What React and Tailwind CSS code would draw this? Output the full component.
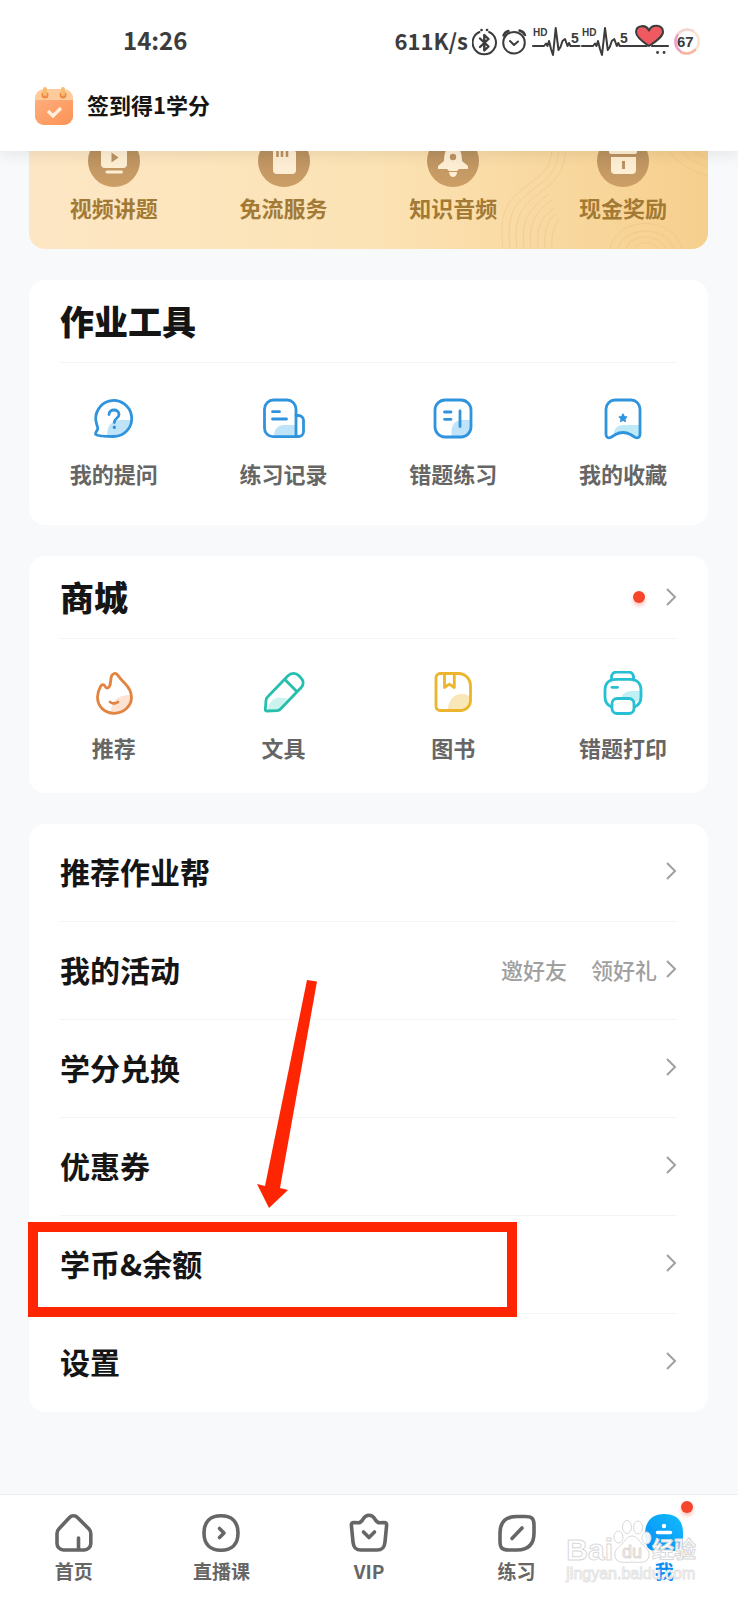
import { useState } from 'react'
import clsx from 'clsx'

/* ---------- Status bar ---------- */

const StatusIcons = () => (
  <svg width="230" height="36" viewBox="0 0 230 36" fill="none" stroke="#3c3c3c" strokeWidth="2" strokeLinecap="round" strokeLinejoin="round" fontFamily="Liberation Sans, sans-serif">
    {/* bluetooth */}
    <path d="M7.5 8a11.7 11.7 0 1 0 9.6 0" />
    <path d="M8 14.500l8.500 8-4.200 4V11l4.200 4-8.500 8" strokeWidth="2.400" />
    <path d="M9.500 6h.1M15 6h.1" strokeWidth="2.600" />
    {/* alarm */}
    <circle cx="42" cy="18.700" r="10.800" />
    <path d="M38 17l4 4 4-3.500" />
    <path d="M31.500 11.500Q33 8 36.500 7M47.500 6.500Q51.500 7.500 53 11" strokeWidth="2.400" />
    {/* signal lines */}
    <path d="M61 22h11l2-2.500 1.500 2.500 1.500-5 2 8 2 6L83.700 4l2.800 22 2-3 2-6 2.500-2 2.500 7 1.500-3 1.500 3h9" />
    <path d="M110 22h11l2-2.500 1.500 2.500 1.500-5 2 8 2 6L133 4l2.800 22 2-3 2-6 2.500-2 2.500 7 1.500-3 1.500 3h27" />
    <path d="M180 22h16" />
    <path d="M177 22C168 16 164 12 164 8c0-7 10-8 13-1.500C180-.5 191 .5 191 8c0 4-5 8-14 14z" fill="#ee5a60" />
    <path d="M185.500 28.500h.1M192 28.500h.1" strokeWidth="2.800" />
    <g fill="#3c3c3c" stroke="none" fontWeight="700">
      <text x="61" y="12" fontSize="10">HD</text>
      <text x="110" y="12" fontSize="10">HD</text>
      <text x="99" y="19" fontSize="14">5</text>
      <text x="148" y="19" fontSize="14">5</text>
      <text x="205" y="23" fontSize="15">67</text>
    </g>
    {/* battery ring */}
    <path d="M206 10a11.700 11.700 0 0 1 15-3" stroke="#f6d3cb" strokeWidth="2.600" />
    <path d="M222 8a11.700 11.700 0 0 1 2 17" stroke="#fbe3cf" strokeWidth="2.600" />
    <path d="M223 26a11.700 11.700 0 0 1-14 2" stroke="#f6b59d" strokeWidth="2.600" />
    <path d="M208 27a11.700 11.700 0 0 1-2.500-16" stroke="#eda0c8" strokeWidth="2.600" />
  </svg>
)

const CalendarIcon = () => (
  <svg width="38" height="40" viewBox="0 0 38 40" fill="none">
    <defs>
      <linearGradient id="calBody" x1="0" y1="0" x2="1" y2="1">
        <stop offset="0" stopColor="#ffad7c" />
        <stop offset="1" stopColor="#fb9254" />
      </linearGradient>
    </defs>
    <rect x="0" y="3" width="38" height="36" rx="9" fill="#fdcb9c" />
    <path d="M0 14h38v16a9 9 0 0 1-9 9H9a9 9 0 0 1-9-9z" fill="url(#calBody)" />
    <circle cx="10" cy="9" r="3.500" fill="#f18a45" />
    <circle cx="28" cy="9" r="3.500" fill="#f18a45" />
    <path d="M10 3v5M28 3v5" stroke="#f6bd72" strokeWidth="4" strokeLinecap="round" />
    <path d="M13 25l5 5 8-8" stroke="#fff0dd" strokeWidth="3.200" />
  </svg>
)

/* ---------- Gold card icons ---------- */

const GoldIcon = ({ children }) => (
  <svg width="52" height="52" viewBox="0 0 52 52">
    <defs>
      <linearGradient id="goldCircle" x1="0" y1="0" x2="0" y2="1">
        <stop offset="0" stopColor="#b08a5c" />
        <stop offset="1" stopColor="#cd9f67" />
      </linearGradient>
    </defs>
    <circle cx="26" cy="26" r="26" fill="url(#goldCircle)" />
    <g fill="#fdeed3">{children}</g>
  </svg>
)

const goldItems = [
  {
    label: '视频讲题',
    icon: (
      <GoldIcon>
        <rect x="13" y="10" width="26" height="23" rx="4" />
        <path d="M23.500 17.500l7 5-7 5z" fill="#bb9262" />
        <rect x="17.500" y="35.500" width="17.500" height="3" rx="1.500" />
      </GoldIcon>
    ),
  },
  {
    label: '免流服务',
    icon: (
      <GoldIcon>
        <path d="M18 10h13l7 7v18a4 4 0 0 1-4 4H19a4 4 0 0 1-4-4V14z" />
        <path d="M19.500 14v8M24 14v8M29 14v8" stroke="#bb9262" strokeWidth="2.500" />
      </GoldIcon>
    ),
  },
  {
    label: '知识音频',
    icon: (
      <GoldIcon>
        <path d="M26 8c7 4 9 10 9 18l6 5v3H32l-2 2h-8l-2-2h-9v-3l6-5c0-8 2-14 9-18z" />
        <path d="M22 37h8c0 3-2 5-4 5s-4-2-4-5z" />
        <circle cx="26" cy="22" r="3.200" fill="#bb9262" />
      </GoldIcon>
    ),
  },
  {
    label: '现金奖励',
    icon: (
      <GoldIcon>
        <rect x="12" y="11" width="28" height="8" rx="2" />
        <path d="M14 22h25v13a4 4 0 0 1-4 4H18a4 4 0 0 1-4-4z" />
        <path d="M26.500 26v8" stroke="#bb9262" strokeWidth="3" />
      </GoldIcon>
    ),
  },
]

/* ---------- Tool icons ---------- */

const LineIcon = ({ color, children }) => (
  <svg width="44" height="44" viewBox="0 0 44 44" fill="none" stroke={color} strokeWidth="2.800" strokeLinecap="round" strokeLinejoin="round">
    {children}
  </svg>
)

const homeworkTools = [
  {
    label: '我的提问',
    icon: (
      <LineIcon color="#2f94dd">
        <path d="M15 39c0-11 5-16 14-16h11c-1 9-7 16-18 16z" fill="#bfe4fa" stroke="none" />
        <path d="M22 39.500A18 18 0 1 0 4.600 27c.6 2 1.600 3.800 1 5.500C4.500 34.500 2.800 36 3.800 37.500c1.700 1.500 10 2 18.200 2z" />
        <path d="M17 17.500c0-6 10-6 10 0 0 4-4.700 3.500-4.700 8" />
        <path d="M22.300 30.200v.3" strokeWidth="3.200" />
      </LineIcon>
    ),
  },
  {
    label: '练习记录',
    icon: (
      <LineIcon color="#2f94dd">
        <path d="M12 39c0-7 4-11 10-11h12v11z" fill="#bfe4fa" stroke="none" />
        <path d="M34 39.700H11A8.500 8.500 0 0 1 2.500 31V12A9 9 0 0 1 11.500 3H25a9 9 0 0 1 9 9z" />
        <path d="M34 18.500h2.500a5 5 0 0 1 5 5v11a5 5 0 0 1-5 5H34" />
        <path d="M10.500 14.700h7M10.500 22h14" />
      </LineIcon>
    ),
  },
  {
    label: '错题练习',
    icon: (
      <LineIcon color="#2f94dd">
        <path d="M20.500 39.500V34c0-6 4-11 10-11H40v8c0 5-4 8.500-8 8.500z" fill="#bfe4fa" stroke="none" />
        <rect x="4" y="3" width="36" height="37" rx="10" />
        <path d="M13.500 15h6.500M13.500 22.300h6.500M29 14v15.500" />
      </LineIcon>
    ),
  },
  {
    label: '我的收藏',
    icon: (
      <LineIcon color="#2f94dd">
        <path d="M13 37c0-6 4-9 10-9h16v12l-5-1-11-4z" fill="#bdeaf6" stroke="none" />
        <path d="M5 12a9 9 0 0 1 9-9h16a9 9 0 0 1 9 9v25.500c0 3-2.500 4-5 2.800l-4.500-2.800q-7.500-4-15 0L10 40.300c-2.500 1.200-5 .2-5-2.800z" />
        <path d="M22 17l1.200 2.500 2.600.4-1.900 1.900.5 2.700-2.400-1.300-2.400 1.300.5-2.700-1.900-1.900 2.600-.4z" fill="#2f94dd" strokeWidth="1.200" />
      </LineIcon>
    ),
  },
]

const shopTools = [
  {
    label: '推荐',
    icon: (
      <LineIcon color="#e2833f">
        <path d="M19 41c0-11 6-17 20-17 1 9-7 17-17 18z" fill="#fce3d3" stroke="none" />
        <path d="M25.500 3.800c-2-2.500-5-1.200-6 1.200-.9 3-.6 6-1.500 9-.8 3.500-3.800 4-5.200 1-1-2-3-1.800-4 0C6.800 18.500 5.500 22 5.500 26c0 10 7.500 16.300 16.800 16.300S39.500 35 39.500 26.500c0-6-3-10.500-7-14.500-3-3-5-5.500-7-8.200z" />
        <path d="M18 31q4 3 8 0" />
      </LineIcon>
    ),
  },
  {
    label: '文具',
    icon: (
      <LineIcon color="#26bfad">
        <path d="M6 39c0-6 4-11 10-12.500l10 1L17 38z" fill="#cdf3ee" stroke="none" />
        <path d="M3.300 38.500L4 29.500q0-2 1.500-3.500L26 4.800a7.500 7.500 0 0 1 11 0l2.200 2.400a6.500 6.500 0 0 1 0 9.300L18.500 38q-1.300 1.500-3.500 1.600L5 40q-1.800 0-1.700-1.500z" />
        <path d="M22.800 8.500l12 12" />
      </LineIcon>
    ),
  },
  {
    label: '图书',
    icon: (
      <LineIcon color="#ebb62c">
        <path d="M17 39c0-10 6-16 14-16 4 0 7 1.500 8.500 3v8c-1 4-4 5.500-8 5.500z" fill="#fae7b8" stroke="none" />
        <path d="M9 2.500h18.500a12 12 0 0 1 12 12v15a10 10 0 0 1-10 10H9A4 4 0 0 1 5 35.500v-29a4 4 0 0 1 4-4z" />
        <path d="M13.500 3v13.500l4.800-3.300 5 3.300V3" />
      </LineIcon>
    ),
  },
  {
    label: '错题打印',
    icon: (
      <LineIcon color="#27bfd3">
        <path d="M20 28c1-5 5-8 10-8h9v9l-6 2-3-3z" fill="#bff0f5" stroke="none" />
        <path d="M10.500 36C6 34 4 30 4 26v-7C4 12.500 8 8.300 15 8.300h14c7 0 11 4.200 11 10.700v7c0 4-2 8-6.500 10" />
        <path d="M10.500 9V6A5 5 0 0 1 15.500 1h12a5 5 0 0 1 5 5v3" />
        <path d="M11 16.300h5.500" />
        <rect x="11" y="27.500" width="22" height="15" rx="5" fill="#fff" />
      </LineIcon>
    ),
  },
]

/* ---------- Tab bar icons ---------- */

const TabIcon = ({ children }) => (
  <svg width="40" height="40" viewBox="0 0 40 40" fill="none" stroke="#666" strokeWidth="3.600" strokeLinecap="round" strokeLinejoin="round">
    {children}
  </svg>
)

const tabs = [
  {
    label: '首页',
    icon: (
      <TabIcon>
        <path d="M15.500 4.500a5.500 5.500 0 0 1 8 0L35 16q1.800 1.800 1.800 4.500v10a6.500 6.500 0 0 1-6.500 6.500H9.500A6.500 6.500 0 0 1 3 30.500v-10Q3 17.800 4.800 16z" />
        <path d="M24.500 25v11" />
      </TabIcon>
    ),
  },
  {
    label: '直播课',
    icon: (
      <TabIcon>
        <path d="M20 2.800c11 0 17 6 17 17.200s-6 17.200-17 17.200S3 31.200 3 20 9 2.800 20 2.800z" />
        <path d="M18.500 15.500l4.500 4.500-4.500 4.500" />
      </TabIcon>
    ),
  },
  {
    label: 'VIP',
    icon: (
      <TabIcon>
        <path d="M5 9.500l4.500.3c2 0 3.200-1.500 4.500-3.600 3-5.200 9-5.200 12 0 1.300 2.100 2.500 3.600 4.500 3.600l4.500-.3c2 0 2.800 1 2.600 3L36 29c-.5 6-3 8-8 8H12c-5 0-7.500-2-8-8L2.400 12.500c-.2-2 .6-3 2.600-3z" />
        <path d="M14.500 19l5.500 5.500 5.500-5.500" />
      </TabIcon>
    ),
  },
  {
    label: '练习',
    icon: (
      <TabIcon>
        <path d="M20 3.500h8c7 0 9 2 9 9V20c0 12-6 17-17 17h-8c-7 0-9-2-9-9v-8C3 9 9 3.500 20 3.500z" />
        <path d="M15 25.500L25 15" />
      </TabIcon>
    ),
  },
  {
    label: '我',
    dot: true,
    icon: (
      <svg width="40" height="40" viewBox="0 0 40 40" fill="none">
        <defs>
          <linearGradient id="meBlob" x1="1" y1="0" x2="0" y2="1">
            <stop offset="0" stopColor="#12bdfb" />
            <stop offset="1" stopColor="#078cf8" />
          </linearGradient>
        </defs>
        <path d="M20 1c13 0 19 7 19 19v11c0 5-2 7-7 7H12C4 38 1 33 1 22 1 8 8 1 20 1z" fill="url(#meBlob)" />
        <circle cx="20" cy="13" r="2.200" fill="#fff" />
        <path d="M13.500 19.500h13" stroke="#fff" strokeWidth="3.400" strokeLinecap="round" />
      </svg>
    ),
  },
]

const menuRows = [
  { label: '推荐作业帮' },
  { label: '我的活动', extra: ['邀好友', '领好礼'] },
  { label: '学分兑换' },
  { label: '优惠券' },
  { label: '学币&余额', highlighted: true },
  { label: '设置' },
]

/* ---------- Shared parts ---------- */

const Chevron = () => (
  <svg width="12" height="20" viewBox="0 0 12 20" fill="none" stroke="#a0a0a0" strokeWidth="2">
    <path d="M2 2l8 8-8 8" />
  </svg>
)

const RedDot = () => <span className="block size-3 rounded-full bg-[#f5452b] shadow-[0_3px_4px_#f5452b55]" />

const ToolCard = ({ title, tools, dot, gridClass }) => (
  <section className="mt-[31px] rounded-2xl bg-white">
    <div className="mx-[31px] flex h-[83px] items-center justify-between border-b border-[#f3f3f4]">
      <h2 className="text-[34px] leading-10 font-black text-[#151515]">{title}</h2>
      {dot && (
        <a href="#shop" aria-label={title} className="flex items-center gap-5">
          <RedDot />
          <Chevron />
        </a>
      )}
    </div>
    <div className={clsx('grid grid-cols-4', gridClass)}>
      {tools.map((tool) => (
        <button key={tool.label} type="button" className="flex flex-col items-center gap-[18px]">
          {tool.icon}
          <span className="text-[22px] leading-7 font-bold text-[#666]">{tool.label}</span>
        </button>
      ))}
    </div>
  </section>
)

const MenuRow = ({ label, extra, highlighted, last }) => (
  <li className="relative px-[31px]">
    <button
      type="button"
      className={clsx('flex h-[98px] w-full items-center justify-between pb-1', !last && 'border-b border-[#f3f3f4]')}
    >
      <span className="text-[30px] leading-9 font-bold text-[#151515]">{label}</span>
      <span className="flex items-center gap-2 text-[22px] leading-7 font-medium text-[#a0a0a0]">
        {extra && (
          <span className="flex gap-6">
            {extra.map((text) => (
              <span key={text}>{text}</span>
            ))}
          </span>
        )}
        <Chevron />
      </span>
    </button>
    {highlighted && (
      <>
        <svg className="pointer-events-none absolute -top-[236px] left-[228px]" width="61" height="228" viewBox="0 0 61 228" fill="#fe2502">
          <path d="M50 0L60 1.500 23 208l8 2-19 18L0 204l8 2z" />
        </svg>
        <div className="pointer-events-none absolute top-[6px] -left-px h-[95px] w-[72%] border-10 border-[#fe2502]" />
      </>
    )}
  </li>
)

/* Outlined site mark over the tab bar */
const Watermark = () => (
  <div className="pointer-events-none absolute right-[42px] bottom-4 flex flex-col font-['Liberation_Sans','Noto_Sans_CJK_SC',sans-serif]">
    <div className="flex items-end text-white [-webkit-text-stroke:1px_#d9d9d9]">
      <span className="text-[30px] leading-7 font-bold">Bai</span>
      <svg width="39" height="44" viewBox="0 0 39 44" fill="#fff" fillOpacity="0.9" stroke="#d9d9d9">
        <ellipse cx="5.500" cy="17" rx="4.500" ry="6" />
        <ellipse cx="14" cy="7" rx="4.500" ry="6.500" />
        <ellipse cx="25" cy="7.500" rx="4.500" ry="6.500" />
        <ellipse cx="33.500" cy="18" rx="4.500" ry="6" />
        <path d="M19 16c5 0 7 5 10 8 4 4 8 6 7 12-1 7-8 7-17 6-9 1-16 1-17-6-1-6 3-8 7-12 3-3 5-8 10-8z" />
        <text x="19" y="38" fontSize="18" textAnchor="middle" fill="#fff">du</text>
      </svg>
      <span className="text-[22px] leading-7 font-bold">经验</span>
    </div>
    <span className="text-[16px] leading-5 text-white [-webkit-text-stroke:1px_#e4e4e4]">jingyan.baidu.com</span>
  </div>
)

const App = () => {
  const [activeTab, setActiveTab] = useState('我')

  return (
    <div className="flex min-h-screen flex-col bg-[#f7f9fb] font-['Noto_Sans_CJK_SC',sans-serif]">
      <header className="relative z-10 bg-white pb-[23px] shadow-[0_4px_14px_#00000014]">
        <div className="flex h-[84px] items-center justify-between pr-9 pl-[123px] font-bold text-[#3c3c3c]">
          <span className="pb-1 text-[24px] leading-7">14:26</span>
          <div className="flex items-center gap-1">
            <span className="pb-1 text-[22px] leading-7">611K/s</span>
            <StatusIcons />
          </div>
        </div>
        <button type="button" className="flex h-11 items-center gap-[14px] pl-[35px]">
          <CalendarIcon />
          <span className="pb-1 text-[22px] leading-7 font-bold text-[#151515]">签到得1学分</span>
        </button>
      </header>

      <main className="pr-[30px] pb-10 pl-[29px]">
        <section className="relative overflow-hidden rounded-b-2xl bg-linear-to-r from-[#fde6c4] via-[#fce3b5] to-[#f6cf8d]">
          <svg className="absolute right-0 bottom-0" width="220" height="99" viewBox="0 0 220 99" fill="none" stroke="#e3bf80" strokeOpacity="0.4">
            <path d="M15 99C10 60 20 50 40 35S62 15 64 0" />
            <path d="M22 99c-4-36 5-46 25-61S69 15 71 0" />
            <path d="M29 99c-4-33 5-43 25-58S76 15 78 0" />
            <path d="M36 99c-3-30 5-40 25-55" />
            <path d="M43 99c-3-27 5-37 22-50" />
            <path d="M50 99c-2-24 5-34 18-42" />
            <path d="M57 99c-2-21 4-30 12-36" />
            <path d="M64 99c-1-16 2-24 8-30" />
            <path d="M122 99c6-34 64-34 72 0M130 99c6-24 48-24 56 0M138 99c4-16 34-16 40 0M146 99c4-8 20-8 24 0" />
            <path d="M180 0q14 20 40 26M192 0q10 12 28 17M204 0q6 6 16 9" />
          </svg>
          <div className="relative -mt-4 grid grid-cols-4 pb-7">
            {goldItems.map((item) => (
              <button key={item.label} type="button" className="flex flex-col items-center gap-[6px]">
                {item.icon}
                <span className="text-[22px] leading-7 font-bold text-[#a27a35]">{item.label}</span>
              </button>
            ))}
          </div>
        </section>

        <ToolCard title="作业工具" tools={homeworkTools} gridClass="pt-[34px] pb-[38px]" />
        <ToolCard title="商城" tools={shopTools} gridClass="pt-8 pb-8" dot />

        <ul className="mt-[31px] rounded-2xl bg-white">
          {menuRows.map((row, i) => (
            <MenuRow key={row.label} {...row} last={i === menuRows.length - 1} />
          ))}
        </ul>
      </main>

      <nav className="relative mt-auto grid h-[106px] grid-cols-5 border-t border-[#ebedef] bg-white">
        {tabs.map((tab) => (
          <button
            key={tab.label}
            type="button"
            onClick={() => setActiveTab(tab.label)}
            className="flex flex-col items-center gap-1 pt-[18px]"
          >
            <span className="relative">
              {tab.icon}
              {tab.dot && (
                <span className="absolute -top-3 -right-[9px]">
                  <RedDot />
                </span>
              )}
            </span>
            <span
              className={clsx(
                'text-[19px] leading-7 font-bold',
                activeTab === tab.label ? 'text-[#0b8df5]' : 'text-[#666]'
              )}
            >
              {tab.label}
            </span>
          </button>
        ))}
        <Watermark />
      </nav>
    </div>
  )
}

export default App
